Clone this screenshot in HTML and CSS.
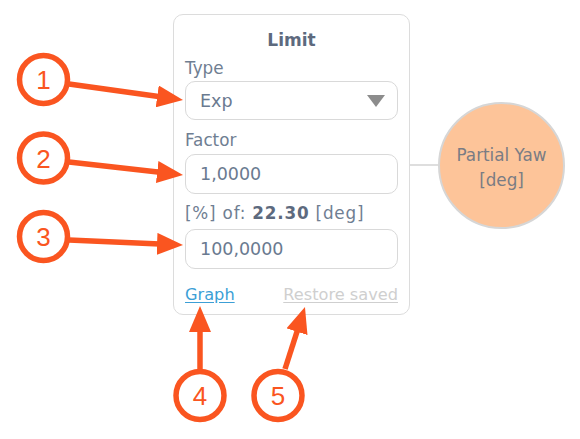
FILE: index.html
```html
<!DOCTYPE html>
<html lang="en">
<head>
<meta charset="utf-8">
<title>Limit node</title>
<link rel="stylesheet" href="styles.css">
</head>
<body>
<div class="stage">
  <div class="flow">
    <section class="card">
      <h1 class="card-title">Limit</h1>

      <label class="field-label field-label--first">Type</label>
      <div class="select">
        <span class="select-value">Exp</span>
        <span class="select-caret"></span>
      </div>

      <label class="field-label field-label--factor">Factor</label>
      <div class="input">1,0000</div>

      <label class="field-label field-label--pct">[%] of: <b>22.30</b> [deg]</label>
      <div class="input">100,0000</div>

      <div class="links">
        <a class="link link--graph" href="#">Graph</a>
        <a class="link link--muted" href="#">Restore saved</a>
      </div>
    </section>

    <div class="connector"></div>

    <div class="node">
      <span>Partial Yaw</span>
      <span>[deg]</span>
    </div>
  </div>

  <svg class="callouts" width="580" height="439" viewBox="0 0 580 439" aria-hidden="true">
    <defs>
      <marker id="head" markerUnits="userSpaceOnUse" viewBox="0 0 26 22" refX="14" refY="11" markerWidth="26" markerHeight="22" orient="auto">
        <path d="M0,0 L26,11 L0,22 z" fill="#fa5520"/>
      </marker>
    </defs>
    <g class="callout-lines">
      <line x1="69" y1="84" x2="171.1" y2="98.3" marker-end="url(#head)"/>
      <line x1="69" y1="162" x2="171.1" y2="173.6" marker-end="url(#head)"/>
      <line x1="69" y1="240" x2="171" y2="244.5" marker-end="url(#head)"/>
      <line x1="200" y1="369" x2="200" y2="318" marker-end="url(#head)"/>
      <line x1="285" y1="369" x2="301.3" y2="318.4" marker-end="url(#head)"/>
    </g>
    <g class="callout-rings">
      <circle cx="43.5" cy="79.5" r="24"/>
      <circle cx="43.5" cy="158" r="24"/>
      <circle cx="43.5" cy="236.5" r="24"/>
      <circle cx="200" cy="395.5" r="24"/>
      <circle cx="278" cy="395.5" r="24"/>
    </g>
    <g class="callout-nums">
      <text x="43.5" y="89">1</text>
      <text x="43.5" y="167.5">2</text>
      <text x="43.5" y="246">3</text>
      <text x="200" y="405">4</text>
      <text x="278" y="405">5</text>
    </g>
  </svg>
</div>
</body>
</html>
```
FILE: styles.css
```css
html, body {
  margin: 0;
  padding: 0;
  background: #ffffff;
}

.stage {
  position: relative;
  width: 580px;
  height: 439px;
  overflow: hidden;
  font-family: "DejaVu Sans", Verdana, sans-serif;
}

.flow {
  display: flex;
  align-items: flex-start;
  padding: 14px 0 0 173px;
}

/* settings card */
.card {
  width: 213px;
  padding: 13px 11px 7px;
  border: 1px solid #dcdcdc;
  border-radius: 10px;
  background: #fff;
  display: flex;
  flex-direction: column;
  color: #66768c;
}

.card-title {
  margin: 0;
  font-size: 17px;
  line-height: 24px;
  font-weight: bold;
  text-align: center;
  color: #5d6a7e;
}

.field-label {
  font-size: 16.8px;
  line-height: 24px;
  color: #6f7e92;
}
.field-label b { color: #5d6a7e; }
.field-label--first { margin: 4px 0 1px; }
.field-label--factor { margin: 8px 0 2px; }
.field-label--pct { margin: 7px 0 4px; letter-spacing: 0.8px; }

.select,
.input {
  box-sizing: border-box;
  height: 40px;
  border: 1px solid #d9d9d9;
  border-radius: 10px;
  padding: 0 14px;
  display: flex;
  align-items: center;
  font-size: 17.5px;
  color: #6a7a90;
}
.select { height: 39px; justify-content: space-between; }

.select-caret {
  width: 0;
  height: 0;
  border-left: 9px solid transparent;
  border-right: 9px solid transparent;
  border-top: 12px solid #8c8c8c;
  margin-right: -2px;
}

.links {
  display: flex;
  justify-content: space-between;
  margin-top: 14px;
  font-size: 16.2px;
  line-height: 24px;
}
.link { text-decoration: underline; text-underline-offset: 2px; }
.link--graph { color: #3c9fd6; }
.link--muted { color: #cfcfcf; }

/* link from the card to the node */
.connector {
  width: 28px;
  height: 2px;
  margin-top: 150px;
  background: #dedede;
}

.node {
  box-sizing: border-box;
  width: 127px;
  height: 127px;
  margin-top: 88px;
  border-radius: 50%;
  border: 2px solid #d6d6d6;
  background: #fdc499;
  display: flex;
  flex-direction: column;
  align-items: center;
  justify-content: center;
  padding-top: 4px;
  font-size: 16.8px;
  line-height: 25px;
  color: #7a7c84;
}

/* numbered call-outs drawn over the page */
.callouts {
  position: absolute;
  left: 0;
  top: 0;
  pointer-events: none;
}
.callout-lines line {
  stroke: #fa5520;
  stroke-width: 5.5;
}
.callout-rings circle {
  fill: #fff;
  stroke: #fa5520;
  stroke-width: 5.5;
}
.callout-nums text {
  font-family: "Liberation Sans", Arial, sans-serif;
  font-size: 26px;
  fill: #fa5520;
  text-anchor: middle;
}
```
